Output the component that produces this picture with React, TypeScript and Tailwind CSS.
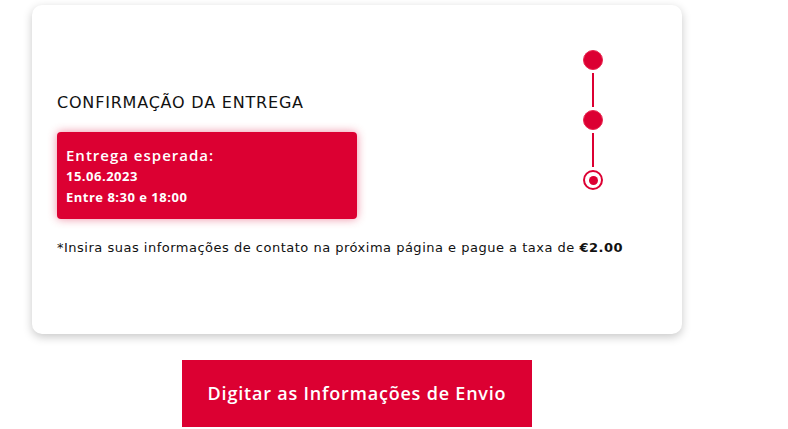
import React from "react";

function Stepper() {
  return (
    <div className="flex flex-col items-center">
      <div className="h-[20px] w-[20px] rounded-full border border-[#e9264f] bg-[#dc0032]" />
      <div className="my-[3px] h-[34px] w-[2px] bg-[#dc0032]" />
      <div className="h-[20px] w-[20px] rounded-full border border-[#e9264f] bg-[#dc0032]" />
      <div className="my-[3px] h-[34px] w-[2px] bg-[#dc0032]" />
      <div className="flex h-[20px] w-[20px] items-center justify-center rounded-full border-2 border-[#dc0032] bg-white">
        <div className="h-[9px] w-[9px] rounded-full bg-[#dc0032]" />
      </div>
    </div>
  );
}

const dejavu = { fontFamily: '"DejaVu Sans", "Open Sans", sans-serif' };

export default function App() {
  return (
    <div
      className="min-h-[429px] bg-white"
      style={{ fontFamily: '"Open Sans", "Liberation Sans", sans-serif' }}
    >
      <div className="ml-[32px] w-[650px] pt-[5px]">
        <div className="flex h-[329px] rounded-[10px] bg-white pl-[25px] shadow-[0_3px_10px_rgba(0,0,0,0.22)]">
          <div className="min-w-0 flex-1 pt-[86px]">
            <h2
              className="text-[16px] leading-[24px] font-normal tracking-[0.8px] text-[#111]"
              style={dejavu}
            >
              CONFIRMAÇÃO DA ENTREGA
            </h2>
            <div className="mt-[17px] h-[87px] w-[300px] rounded-[4px] bg-[#dc0032] pl-[9px] pt-[12px] text-white shadow-[0_0_10px_rgba(220,0,50,0.45)]">
              <p className="text-[15px] leading-[22px] font-semibold tracking-[1px]">Entrega esperada:</p>
              <p className="text-[13px] leading-[21px] font-bold tracking-[0.5px]">15.06.2023</p>
              <p className="text-[13px] leading-[21px] font-bold tracking-[0.5px]">Entre 8:30 e 18:00</p>
            </div>
            <p
              className="mt-[19px] whitespace-nowrap text-[13px] leading-[20px] tracking-[0.5px] text-[#111]"
              style={dejavu}
            >
              *Insira suas informações de contato na próxima página e pague a taxa de{" "}
              <span className="font-bold">€2.00</span>
            </p>
          </div>
          <div className="mr-[79px] pt-[45px]">
            <Stepper />
          </div>
        </div>
        <div className="mt-[26px] flex justify-center">
          <button className="h-[67px] w-[350px] bg-[#dc0032] text-[18px] font-semibold tracking-[0.8px] text-white">
            Digitar as Informações de Envio
          </button>
        </div>
      </div>
    </div>
  );
}
